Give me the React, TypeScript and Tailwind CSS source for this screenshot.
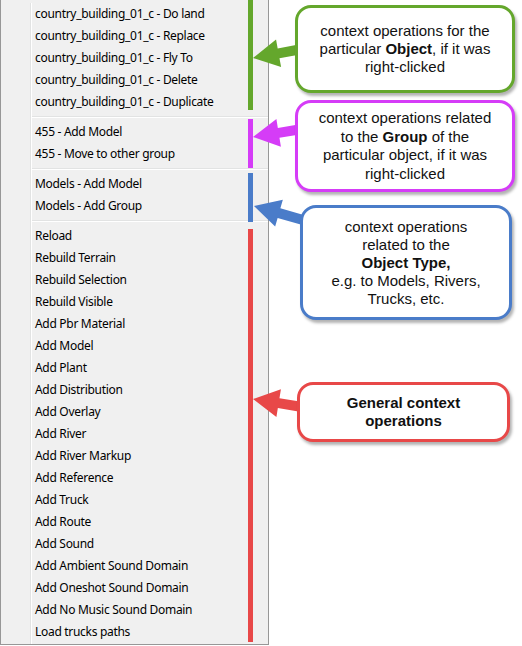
import React from "react";

const groups: string[][] = [
  [
    "country_building_01_c - Do land",
    "country_building_01_c - Replace",
    "country_building_01_c - Fly To",
    "country_building_01_c - Delete",
    "country_building_01_c - Duplicate",
  ],
  ["455 - Add Model", "455 - Move to other group"],
  ["Models - Add Model", "Models - Add Group"],
  [
    "Reload",
    "Rebuild Terrain",
    "Rebuild Selection",
    "Rebuild Visible",
    "Add Pbr Material",
    "Add Model",
    "Add Plant",
    "Add Distribution",
    "Add Overlay",
    "Add River",
    "Add River Markup",
    "Add Reference",
    "Add Truck",
    "Add Route",
    "Add Sound",
    "Add Ambient Sound Domain",
    "Add Oneshot Sound Domain",
    "Add No Music Sound Domain",
    "Load trucks paths",
  ],
];

// fat arrow polygon from tail (sx,sy) to tip (tx,ty)
function arrow(tx: number, ty: number, sx: number, sy: number) {
  const dx = sx - tx;
  const dy = sy - ty;
  const len = Math.hypot(dx, dy);
  const ux = dx / len;
  const uy = dy / len;
  const px = -uy;
  const py = ux;
  const head = 26;
  const hw = 14;
  const sw = 5;
  const bx = tx + ux * head;
  const by = ty + uy * head;
  const pts = [
    [tx, ty],
    [bx + px * hw, by + py * hw],
    [bx + px * sw, by + py * sw],
    [sx + px * sw, sy + py * sw],
    [sx - px * sw, sy - py * sw],
    [bx - px * sw, by - py * sw],
    [bx - px * hw, by - py * hw],
  ];
  return pts.map((p) => p.join(",")).join(" ");
}

const GREEN = "#64a72c";
const MAGENTA = "#d53cf7";
const BLUE = "#4a7cc9";
const RED = "#e84848";

export default function App() {
  return (
    <div className="relative w-[522px] h-[646px] bg-white overflow-hidden">
      {/* ── CONTEXT MENU ── */}
      <div className="flex w-[269px] h-[645px] border-l border-r border-b border-[#979797] bg-[#f0f0f0] pt-[3px] text-black text-[12px] tracking-[-0.3px] font-['Noto_Sans',sans-serif]">
        <div className="w-[29px] shrink-0" />
        <div className="w-px shrink-0 bg-[#e2e3e3]" />
        <div className="w-px shrink-0 bg-white" />
        <div className="flex-1 flex flex-col">
          {groups.map((items, gi) => (
            <div key={gi}>
              {gi > 0 && (
                <div className="h-[8px] flex flex-col justify-center">
                  <div className="h-px bg-[#e2e3e3]" />
                  <div className="h-px bg-white" />
                </div>
              )}
              {items.map((item) => (
                <div key={item} className="h-[22px] leading-[22px] pl-[3px] whitespace-nowrap">
                  {item}
                </div>
              ))}
            </div>
          ))}
        </div>
      </div>

      {/* ── BARS + ARROWS ── */}
      <svg className="absolute inset-0" width={522} height={646}>
        <rect x={248} y={0} width={5} height={110} fill={GREEN} />
        <rect x={248} y={119} width={5} height={49} fill={MAGENTA} />
        <rect x={248} y={173} width={5} height={49} fill={BLUE} />
        <rect x={248} y={229} width={5} height={413} fill={RED} />
        <polygon points={arrow(253, 58, 302, 49)} fill={GREEN} />
        <polygon points={arrow(253, 137, 302, 129)} fill={MAGENTA} />
        <polygon points={arrow(254, 206, 310, 222)} fill={BLUE} />
        <polygon points={arrow(253, 399, 302, 407)} fill={RED} />
      </svg>

      {/* ── CALLOUTS ── */}
      <div className="absolute left-[295px] top-[5px] w-[220px] h-[88px] rounded-[16px] border-[3px] border-[#64a72c] bg-white shadow-[2px_3px_3px_rgba(0,0,0,0.3)] flex items-center justify-center text-center text-[15px] leading-[18px] text-[#111] font-['Liberation_Sans',Arial,sans-serif]">
        <p>
          context operations for the
          <br />
          particular <b>Object</b>, if it was
          <br />
          right-clicked
        </p>
      </div>

      <div className="absolute left-[295px] top-[100px] w-[220px] h-[92px] rounded-[16px] border-[3px] border-[#d53cf7] bg-white shadow-[2px_3px_3px_rgba(0,0,0,0.3)] flex items-center justify-center text-center text-[15px] leading-[18.5px] text-[#111] font-['Liberation_Sans',Arial,sans-serif]">
        <p>
          context operations related
          <br />
          to the <b>Group</b> of the
          <br />
          particular object, if it was
          <br />
          right-clicked
        </p>
      </div>

      <div className="absolute left-[300px] top-[205px] w-[212px] h-[115px] rounded-[16px] border-[3px] border-[#4a7cc9] bg-white shadow-[2px_3px_3px_rgba(0,0,0,0.3)] flex items-center justify-center text-center text-[15px] leading-[18px] text-[#111] font-['Liberation_Sans',Arial,sans-serif]">
        <p>
          context operations
          <br />
          related to the
          <br />
          <b>Object Type,</b>
          <br />
          e.g. to Models, Rivers,
          <br />
          Trucks, etc.
        </p>
      </div>

      <div className="absolute left-[297px] top-[382px] w-[213px] h-[60px] rounded-[16px] border-[3px] border-[#e84848] bg-white shadow-[2px_3px_3px_rgba(0,0,0,0.3)] flex items-center justify-center text-center text-[15px] leading-[18px] font-bold text-[#111] font-['Liberation_Sans',Arial,sans-serif]">
        <p>
          General context
          <br />
          operations
        </p>
      </div>
    </div>
  );
}
